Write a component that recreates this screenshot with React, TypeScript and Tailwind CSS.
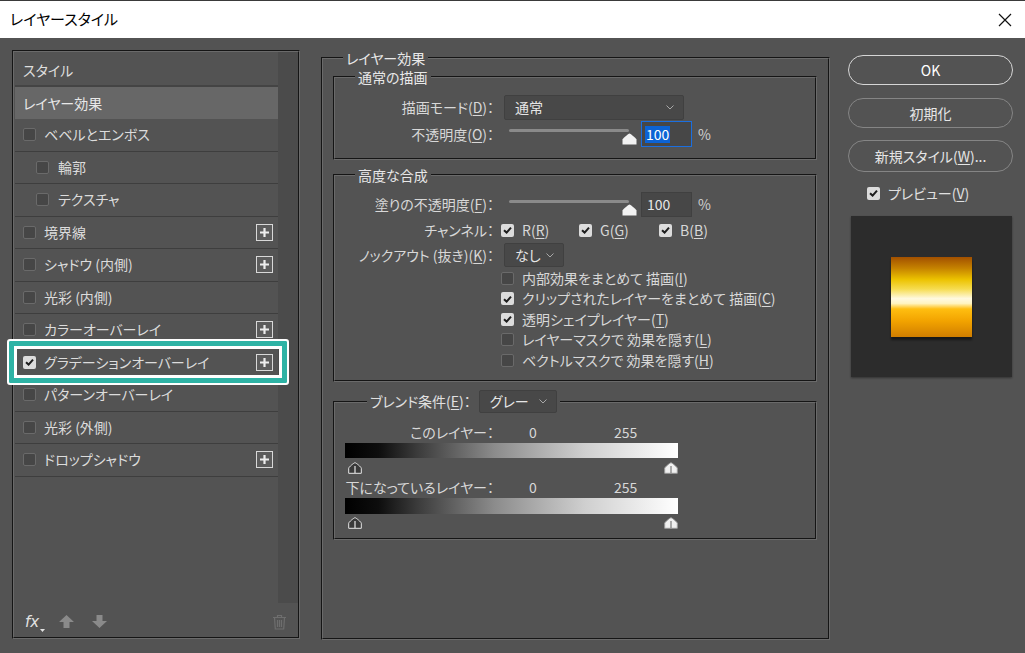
import type { ReactNode } from "react";

const FONT =
  "font-['Noto_Sans_CJK_JP','Noto_Sans',sans-serif] [font-feature-settings:'palt']";

/* ── Small controls ── */

function Check({ on = false }: { on?: boolean }) {
  if (on) {
    return (
      <span className="flex h-[13px] w-[13px] shrink-0 items-center justify-center rounded-[2px] bg-[#dcdcdc]">
        <svg width="9" height="8" viewBox="0 0 9 8">
          <path d="M1 4.2 L3.6 6.6 L8 1.6" fill="none" stroke="#1e1e1e" strokeWidth="2" />
        </svg>
      </span>
    );
  }
  return <span className="h-[13px] w-[13px] shrink-0 rounded-[2px] border border-[#6a6a6a] bg-[#464646]" />;
}

function PlusBox() {
  return (
    <span className="flex h-[17px] w-[17px] shrink-0 items-center justify-center border-[1.5px] border-[#d8d8d8] bg-[#5c5c5c]">
      <svg width="11" height="11" viewBox="0 0 11 11">
        <path d="M5.5 1v9M1 5.5h9" stroke="#ededed" strokeWidth="2.2" />
      </svg>
    </span>
  );
}

function Chevron() {
  return (
    <svg width="8" height="5" viewBox="0 0 8 5" className="shrink-0">
      <path d="M0.5 0.5 L4 4 L7.5 0.5" fill="none" stroke="#a8a8a8" strokeWidth="1" />
    </svg>
  );
}

function Select({ value, className }: { value: string; className: string }) {
  return (
    <div
      className={`flex shrink-0 items-center justify-between rounded-[2px] border border-[#404040] bg-[#484848] pl-[10px] pr-[9px] text-[14px] text-[#e6e6e6] ${className}`}
    >
      <span>{value}</span>
      <Chevron />
    </div>
  );
}

function U({ children }: { children: ReactNode }) {
  return <span className="underline underline-offset-[2px]">{children}</span>;
}

function Slider() {
  return (
    <div className="relative ml-[15px] h-full w-[132px] shrink-0">
      <div className="absolute left-0 top-[8px] h-[3px] w-[120px] rounded-full bg-[#8a8a8a]" />
      <svg className="absolute left-[113px] top-[12px]" width="15" height="12" viewBox="0 0 15 12">
        <path d="M7.5 0.5 C8.5 0.5 14.5 5.5 14.5 6.5 V11.5 H0.5 V6.5 C0.5 5.5 6.5 0.5 7.5 0.5Z" fill="#f2f2f2" />
      </svg>
    </div>
  );
}

function NumInput({ active = false }: { active?: boolean }) {
  return active ? (
    <div className="flex h-[26px] w-[51px] shrink-0 items-center border-[1.5px] border-[#1b6fe0] bg-[#474747] pl-[3px] text-[14px]">
      <span className="bg-[#0c63d4] px-[1px] leading-[17px] text-white">100</span>
    </div>
  ) : (
    <div className="flex h-[25px] w-[51px] shrink-0 items-center border border-[#404040] bg-[#474747] pl-[5px] text-[14px] text-[#e6e6e6]">
      100
    </div>
  );
}

function Label({ children }: { children: ReactNode }) {
  return (
    <span className="flex w-[159px] shrink-0 justify-end whitespace-nowrap text-[14px] text-[#d8d8d8]">
      {children}
    </span>
  );
}

function BlendThumb({ dark = false }: { dark?: boolean }) {
  return (
    <svg width="14" height="12" viewBox="0 0 14 12">
      <path
        d="M7 0.7 C8 0.7 13.3 5.2 13.3 6.2 V11.3 H0.7 V6.2 C0.7 5.2 6 0.7 7 0.7Z"
        fill={dark ? "#3a3a3a" : "#f0f0f0"}
        stroke={dark ? "#e6e6e6" : "#9a9a9a"}
        strokeWidth="1"
      />
      <path d="M7 4 V11" stroke={dark ? "#e6e6e6" : "#7a7a7a"} strokeWidth="1.2" />
    </svg>
  );
}

/* ── Left: effect list ── */

interface Effect {
  label: string;
  indent?: boolean;
  plus?: boolean;
  on?: boolean;
  mark?: boolean;
}

const effects: Effect[] = [
  { label: "ベベルとエンボス" },
  { label: "輪郭", indent: true },
  { label: "テクスチャ", indent: true },
  { label: "境界線", plus: true },
  { label: "シャドウ (内側)", plus: true },
  { label: "光彩 (内側)" },
  { label: "カラーオーバーレイ", plus: true },
  { label: "グラデーションオーバーレイ", plus: true, on: true, mark: true },
  { label: "パターンオーバーレイ" },
  { label: "光彩 (外側)" },
  { label: "ドロップシャドウ", plus: true },
];

function EffectRow({ item }: { item: Effect }) {
  return (
    <div
      className={`relative flex h-[32.5px] items-center border-b border-[#3e3e3e] pr-[5px] text-[14px] text-[#dcdcdc] ${
        item.indent ? "pl-[21px]" : "pl-[8px]"
      }`}
    >
      <Check on={item.on} />
      <span className={`flex-1 whitespace-nowrap ${item.indent ? "ml-[9px]" : "ml-[8px]"}`}>{item.label}</span>
      {item.plus && <PlusBox />}
      {item.mark && (
        <div className="pointer-events-none absolute -bottom-[7px] -left-[8px] -right-[11px] -top-[8px] z-10 rounded-[3px] border-2 border-white shadow-[inset_0_0_0_5px_#2eb3a5,inset_0_0_0_8px_#ffffff]" />
      )}
    </div>
  );
}

function LeftPanel() {
  return (
    <div className="ml-[12px] mt-[12px] flex h-[589px] w-[288px] shrink-0 flex-col border-2 border-[#6a6a6a] [border-style:groove]">
      <div className="flex h-[551px]">
        <div className="flex-1 pl-[1px] pt-[3px]">
          <div className="flex h-[32px] items-center border-b-2 border-[#444444] pl-[8px] text-[14px] text-[#dedede]">
            スタイル
          </div>
          <div className="flex h-[32px] items-center bg-[#676767] pl-[8px] text-[14px] text-[#e8e8e8]">
            レイヤー効果
          </div>
          {effects.map((e) => (
            <EffectRow key={e.label} item={e} />
          ))}
        </div>
        <div className="w-[20px] bg-[#4b4b4b]" />
      </div>

      {/* Toolbar */}
      <div className="flex h-[34px] items-center pl-[11px] pr-[11px] pt-[3px]">
        <span className="flex items-end">
          <span className="font-['DejaVu_Sans',sans-serif] text-[15px] italic leading-[16px] text-[#e2e2e2]">fx</span>
          <svg width="5" height="3" viewBox="0 0 5 3" className="mb-[-2px] ml-[1px]">
            <path d="M0 0 H5 L2.5 3Z" fill="#e2e2e2" />
          </svg>
        </span>
        <svg width="15" height="13" viewBox="0 0 15 13" className="ml-[14px]">
          <path d="M7.5 0 L15 7 H10.5 V13 H4.5 V7 H0Z" fill="#8a8a8a" />
        </svg>
        <svg width="15" height="13" viewBox="0 0 15 13" className="ml-[18px]">
          <path d="M7.5 13 L15 6 H10.5 V0 H4.5 V6 H0Z" fill="#8a8a8a" />
        </svg>
        <svg width="15" height="16" viewBox="0 0 15 16" className="ml-auto">
          <path
            d="M1 3.5 H14 M5.5 3.5 V1.5 H9.5 V3.5 M2.5 3.5 L3.3 15 H11.7 L12.5 3.5 M5.5 6 V13 M7.5 6 V13 M9.5 6 V13"
            fill="none"
            stroke="#6e6e6e"
            strokeWidth="1.2"
          />
        </svg>
      </div>
    </div>
  );
}

/* ── Middle: settings ── */

const GROUP = "border-2 border-[#6a6a6a] [border-style:groove]";

function MiddlePanel() {
  return (
    <fieldset className={`ml-[21px] mt-[12px] h-[590px] w-[509px] shrink-0 ${GROUP}`}>
      <legend className="ml-[20px] px-[3px] text-[14px] leading-[16px] text-[#e8e8e8]">レイヤー効果</legend>
      <div className="px-[10px]">
        {/* 通常の描画 */}
        <fieldset className={`mt-[3px] h-[91px] w-[484px] ${GROUP}`}>
          <legend className="ml-[20px] px-[3px] text-[14px] leading-[16px] text-[#e8e8e8]">通常の描画</legend>
          <div className="pt-[10px]">
            <div className="flex h-[25px] items-center">
              <Label>
                描画モード(<U>D</U>)：
              </Label>
              <Select value="通常" className="ml-[10px] h-[25px] w-[180px]" />
            </div>
            <div className="mt-[1px] flex h-[26px] items-center">
              <Label>
                不透明度(<U>O</U>)：
              </Label>
              <Slider />
              <NumInput active />
              <span className="ml-[6px] text-[14px] text-[#d0d0d0]">%</span>
            </div>
          </div>
        </fieldset>

        {/* 高度な合成 */}
        <fieldset className={`mt-[7px] h-[215px] w-[484px] ${GROUP}`}>
          <legend className="ml-[20px] px-[3px] text-[14px] leading-[16px] text-[#e8e8e8]">高度な合成</legend>
          <div className="pt-[9px]">
            <div className="flex h-[25px] items-center">
              <Label>
                塗りの不透明度(<U>F</U>)：
              </Label>
              <Slider />
              <NumInput />
              <span className="ml-[6px] text-[14px] text-[#d0d0d0]">%</span>
            </div>
            <div className="mt-[1px] flex h-[24px] items-center text-[14px] text-[#d8d8d8]">
              <Label>チャンネル：</Label>
              <div className="ml-[7px] flex w-[78px] items-center">
                <Check on />
                <span className="ml-[8px]">
                  R(<U>R</U>)
                </span>
              </div>
              <div className="flex w-[80px] items-center">
                <Check on />
                <span className="ml-[8px]">
                  G(<U>G</U>)
                </span>
              </div>
              <div className="flex items-center">
                <Check on />
                <span className="ml-[8px]">
                  B(<U>B</U>)
                </span>
              </div>
            </div>
            <div className="mt-[1px] flex h-[24px] items-center">
              <Label>
                ノックアウト (抜き)(<U>K</U>)：
              </Label>
              <Select value="なし" className="ml-[10px] h-[24px] w-[60px]" />
            </div>
            <div className="mt-[1px] pl-[166px] text-[14px] text-[#d8d8d8]">
              {[
                { t: "内部効果をまとめて 描画", k: "I", on: false },
                { t: "クリップされたレイヤーをまとめて 描画", k: "C", on: true },
                { t: "透明シェイプレイヤー", k: "T", on: true },
                { t: "レイヤーマスクで 効果を隠す", k: "L", on: false },
                { t: "ベクトルマスクで 効果を隠す", k: "H", on: false },
              ].map((o) => (
                <div key={o.k} className="flex h-[20.5px] items-center whitespace-nowrap">
                  <Check on={o.on} />
                  <span className="ml-[8px]">
                    {o.t}(<U>{o.k}</U>)
                  </span>
                </div>
              ))}
            </div>
          </div>
        </fieldset>

        {/* ブレンド条件 */}
        <fieldset className={`mt-[8px] h-[150px] w-[484px] ${GROUP}`}>
          <legend className="ml-[32px] px-[3px]">
            <span className="flex items-center text-[14px] text-[#e0e0e0]">
              ブレンド条件(<U>E</U>)：
              <Select value="グレー" className="ml-[8px] h-[23px] w-[78px]" />
            </span>
          </legend>
          <div className="pt-[11px] text-[14px] text-[#d8d8d8]">
            <div className="flex h-[16px] items-center">
              <Label>このレイヤー：</Label>
              <span className="ml-[35px] w-[85px]">0</span>
              <span>255</span>
            </div>
            <div className="ml-[10px] mt-[3px] h-[15px] w-[333px] bg-[linear-gradient(to_right,#000_0%,#0d0d0d_10%,#3c3c3c_22%,#8c8c8c_45%,#cfcfcf_72%,#fff_100%)]" />
            <div className="ml-[10px] mt-[4px] flex h-[12px] w-[333px] justify-between pl-[3px]">
              <BlendThumb dark />
              <BlendThumb />
            </div>
            <div className="mt-[5px] flex h-[16px] items-center">
              <Label>下になっているレイヤー：</Label>
              <span className="ml-[35px] w-[85px]">0</span>
              <span>255</span>
            </div>
            <div className="ml-[10px] mt-[3px] h-[16px] w-[333px] bg-[linear-gradient(to_right,#000_0%,#0d0d0d_10%,#3c3c3c_22%,#8c8c8c_45%,#cfcfcf_72%,#fff_100%)]" />
            <div className="ml-[10px] mt-[3px] flex h-[12px] w-[333px] justify-between pl-[3px]">
              <BlendThumb dark />
              <BlendThumb />
            </div>
          </div>
        </fieldset>
      </div>
    </fieldset>
  );
}

/* ── Right: buttons + preview ── */

function PillButton({ children, primary = false, className = "" }: { children: ReactNode; primary?: boolean; className?: string }) {
  return (
    <button
      type="button"
      className={`flex w-[165px] items-center justify-center rounded-full border-[1.5px] text-[14px] ${
        primary ? "border-[#d6d6d6] text-white" : "border-[#858585] text-[#e6e6e6]"
      } ${className}`}
    >
      {children}
    </button>
  );
}

function RightColumn() {
  return (
    <div className="ml-[18px] mt-[17px] flex w-[165px] shrink-0 flex-col">
      <PillButton primary className="h-[30px]">
        OK
      </PillButton>
      <PillButton className="mt-[13px] h-[30px]">初期化</PillButton>
      <PillButton className="mt-[12px] h-[32px]">
        新規スタイル(<U>W</U>)...
      </PillButton>
      <div className="mt-[13px] flex h-[16px] items-center pl-[19px] text-[14px] text-[#e0e0e0]">
        <Check on />
        <span className="ml-[8px]">
          プレビュー(<U>V</U>)
        </span>
      </div>
      <div className="ml-[3px] mt-[15px] flex h-[161px] w-[161px] items-center justify-center bg-[#2c2c2c] shadow-[0_1px_2px_rgba(0,0,0,0.4)]">
        <div className="h-[80px] w-[81px] bg-[linear-gradient(to_bottom,#a25000_0%,#c58200_14%,#ecc200_28%,#f6dc50_40%,#fff9e0_52%,#fff4c0_58%,#ffbe10_65%,#f2a300_80%,#d07e00_100%)] shadow-[0_3px_2px_rgba(0,0,0,0.45)]" />
      </div>
    </div>
  );
}

export default function App() {
  return (
    <div className={`h-[653px] w-[1025px] overflow-hidden bg-[#535353] ${FONT}`}>
      {/* Title bar */}
      <div className="flex h-[38px] items-center justify-between border-t border-[#3a3a3a] bg-white pl-[10px] pr-[13px]">
        <span className="text-[15px] text-black">レイヤースタイル</span>
        <svg width="14" height="14" viewBox="0 0 14 14">
          <path d="M1 1 L13 13 M13 1 L1 13" stroke="#111" strokeWidth="1.2" />
        </svg>
      </div>

      <div className="flex items-start">
        <LeftPanel />
        <MiddlePanel />
        <RightColumn />
      </div>
    </div>
  );
}
